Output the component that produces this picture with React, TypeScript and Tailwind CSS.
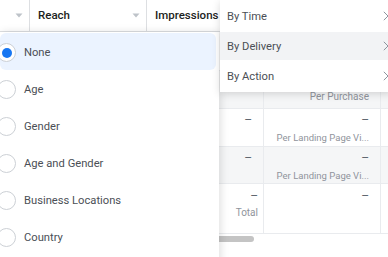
import React from 'react';

const breakdownOptions = ['None', 'Age', 'Gender', 'Age and Gender', 'Business Locations', 'Country'];
const subMenu = ['By Time', 'By Delivery', 'By Action'];

const Caret = () => (
  <svg width="8" height="5" viewBox="0 0 8 5" className="shrink-0">
    <path d="M0.5 0.5 L7.5 0.5 L4 4.5 Z" fill="#bec3c9" />
  </svg>
);

const Chevron = () => (
  <svg width="6" height="10" viewBox="0 0 6 10" className="shrink-0">
    <path d="M0.8 0.8 L5 5 L0.8 9.2" fill="none" stroke="#8d949e" strokeWidth="1" />
  </svg>
);

export default function App() {
  return (
    <div className="relative w-[388px] h-[257px] overflow-hidden bg-white font-['Roboto',sans-serif]">
      {/* Table behind the menus */}
      <div className="w-[620px] flex flex-col">
        {/* Header */}
        <div className="flex h-[32px] border-b border-[#dddfe2] text-[11.5px] font-medium text-[#1c1e21]">
          <div className="w-[30px] border-r border-[#dddfe2] flex items-center justify-end pr-[6px]">
            <Caret />
          </div>
          <div className="w-[117px] border-r border-[#dddfe2] flex items-center justify-between pl-[8px] pr-[6px]">
            <span className="pt-[1px]">Reach</span>
            <Caret />
          </div>
          <div className="w-[117px] border-r border-[#dddfe2] flex items-center pl-[8px]">
            <span className="pt-[1px]">Impressions</span>
          </div>
          <div className="w-[117px] border-r border-[#dddfe2]" />
        </div>

        {/* Body rows */}
        <div className="flex h-[39px] border-b border-[#e9ebee]">
          <div className="w-[264px] border-r border-[#e9ebee]" />
          <div className="w-[117px] border-r border-[#e9ebee]" />
        </div>
        <div className="flex h-[38px] border-b border-[#e9ebee] bg-[#f5f6f7] text-[10px] text-[#90949c]">
          <div className="w-[264px] border-r border-[#e9ebee]" />
          <div className="w-[117px] border-r border-[#e9ebee] flex items-end justify-end pr-[11px] pb-[4px]">
            Per Purchase
          </div>
        </div>
        <div className="flex h-[38px] border-b border-[#e9ebee] text-[#606770]">
          <div className="w-[264px] border-r border-[#e9ebee] flex justify-end pr-[11px] pt-[2px] text-[12px]">–</div>
          <div className="w-[117px] border-r border-[#e9ebee] flex flex-col items-end pr-[11px] pt-[2px]">
            <span className="text-[12px]">–</span>
            <span className="text-[9.5px] text-[#90949c] mt-[2px]">Per Landing Page Vi...</span>
          </div>
        </div>
        <div className="flex h-[37px] border-b border-[#e9ebee] bg-[#f5f6f7] text-[#606770]">
          <div className="w-[264px] border-r border-[#e9ebee] flex justify-end pr-[11px] pt-[2px] text-[12px]">–</div>
          <div className="w-[117px] border-r border-[#e9ebee] flex flex-col items-end pr-[11px] pt-[2px]">
            <span className="text-[12px]">–</span>
            <span className="text-[9.5px] text-[#90949c] mt-[2px]">Per Landing Page Vi...</span>
          </div>
        </div>
        <div className="flex h-[50px] border-b border-[#e9ebee] text-[#606770]">
          <div className="w-[264px] border-r border-[#e9ebee] flex flex-col items-end pr-[5px] pt-[5px]">
            <span className="text-[12px] leading-[14px]">–</span>
            <span className="text-[10px] text-[#90949c] mt-[2px]">Total</span>
          </div>
          <div className="w-[117px] border-r border-[#e9ebee] flex justify-end pr-[11px] pt-[5px] text-[12px] leading-[14px]">–</div>
        </div>
      </div>

      {/* Horizontal scrollbar */}
      <div className="absolute left-[214px] top-[236px] w-[40px] h-[6px] rounded-full bg-[#c4c4c4]" />

      {/* Breakdown menu */}
      <div className="absolute left-0 top-[32px] w-[219px] h-[240px] bg-white shadow-[2px_0_8px_rgba(0,0,0,0.12)] pt-[1px] pr-[3px]">
        {breakdownOptions.map((opt, i) => {
          const selected = i === 0;
          return (
            <div
              key={opt}
              className={`relative flex items-center h-[37px] rounded-[6px] ${selected ? 'bg-[#ebf3ff]' : ''}`}
            >
              <div className="absolute left-[-3px] top-[10px] w-[19px] h-[19px] rounded-full border border-[#ccd0d5] bg-white flex items-center justify-center">
                {selected && <div className="w-[10px] h-[10px] rounded-full bg-[#1877f2]" />}
              </div>
              <span className="pl-[24px] pt-[3px] text-[11.2px] text-[#4b4f56]">{opt}</span>
            </div>
          );
        })}
      </div>

      {/* Submenu */}
      <div className="absolute left-[220px] top-0 w-[172px] h-[92px] bg-white shadow-[0_2px_8px_rgba(0,0,0,0.15)] pt-[2px] flex flex-col gap-[2px]">
        {subMenu.map((s, i) => (
          <div
            key={s}
            className={`flex items-center justify-between h-[28px] pl-[7px] pr-[3px] text-[11.2px] text-[#4b4f56] ${i === 1 ? 'bg-[#f2f3f5]' : ''}`}
          >
            <span className="pt-[2px]">{s}</span>
            <Chevron />
          </div>
        ))}
      </div>
    </div>
  );
}
